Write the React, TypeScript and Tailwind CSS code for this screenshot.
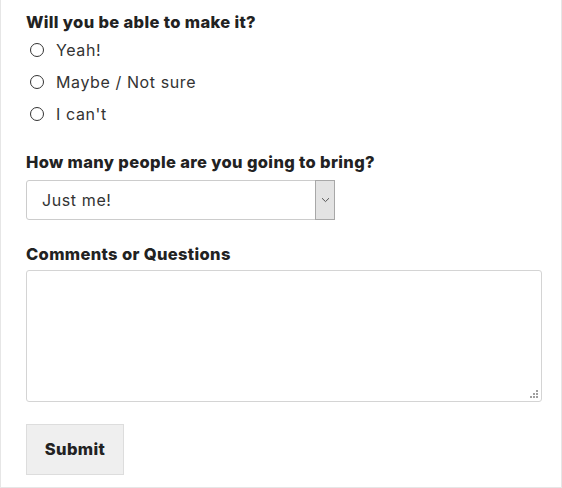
import React, { useState } from 'react';

const options = ['Yeah!', 'Maybe / Not sure', "I can't"];

const RsvpForm = () => {
  const [attending, setAttending] = useState<string | null>(null);
  const [comments, setComments] = useState('');

  return (
    <div
      className="h-[488px] w-[562px] border-x border-b border-[#e6e6e6] bg-white px-[25px] pt-[12px] text-[#333]"
      style={{ fontFamily: 'Inter, "Liberation Sans", sans-serif' }}
    >
      <h3 className="text-[16.5px] leading-[20px] font-extrabold tracking-[0.35px] text-[#222]">
        Will you be able to make it?
      </h3>

      <div className="mt-[2px]">
        {options.map((opt) => (
          <label key={opt} className="flex h-[32px] cursor-pointer items-center">
            <input
              type="radio"
              name="attending"
              checked={attending === opt}
              onChange={() => setAttending(opt)}
              className="ml-[4px] h-[14px] w-[14px] appearance-none rounded-full border border-[#333] bg-white checked:border-[4px]"
            />
            <span className="ml-[12px] text-[16px] leading-[20px] tracking-[0.6px] text-[#333]">{opt}</span>
          </label>
        ))}
      </div>

      <h3 className="mt-[22px] text-[16.5px] leading-[20px] font-extrabold tracking-[0.35px] text-[#222]">
        How many people are you going to bring?
      </h3>

      {/* select drawn by hand so the arrow box matches */}
      <div className="mt-[8px] flex h-[40px] w-[309px] rounded-[3px] border border-[#ccc] bg-white">
        <div className="flex flex-1 items-center pl-[15px] text-[16px] tracking-[0.6px] text-[#333]">Just me!</div>
        <div className="flex w-[20px] items-center justify-center border border-[#a8a8a8] bg-[#e3e3e3] -my-px -mr-px">
          <svg width="9" height="6" viewBox="0 0 9 6" fill="none">
            <path d="M1 1.2 4.5 4.6 8 1.2" stroke="#555" strokeWidth="1" />
          </svg>
        </div>
      </div>

      <h3 className="mt-[24px] text-[16.5px] leading-[20px] font-extrabold tracking-[0.35px] text-[#222]">
        Comments or Questions
      </h3>

      <div className="relative mt-[6px] h-[132px] w-[516px]">
        <textarea
          value={comments}
          onChange={(e) => setComments(e.target.value)}
          className="block h-full w-full resize-none rounded-[3px] border border-[#d4d4d4] bg-white p-2 text-[16px] outline-none"
        />
        {/* resize grip */}
        <svg className="absolute right-[3px] bottom-[3px]" width="9" height="9" viewBox="0 0 9 9">
          <g fill="#a0a0a0">
            <rect x="6" y="0" width="2" height="2" />
            <rect x="3" y="3" width="2" height="2" />
            <rect x="6" y="3" width="2" height="2" />
            <rect x="0" y="6" width="2" height="2" />
            <rect x="3" y="6" width="2" height="2" />
            <rect x="6" y="6" width="2" height="2" />
          </g>
        </svg>
      </div>

      <button className="mt-[22px] h-[51px] w-[98px] border border-[#ddd] bg-[#efefef] text-[16.5px] font-extrabold tracking-[0.35px] text-[#222]">
        Submit
      </button>
    </div>
  );
};

export default function App() {
  return <RsvpForm />;
}
